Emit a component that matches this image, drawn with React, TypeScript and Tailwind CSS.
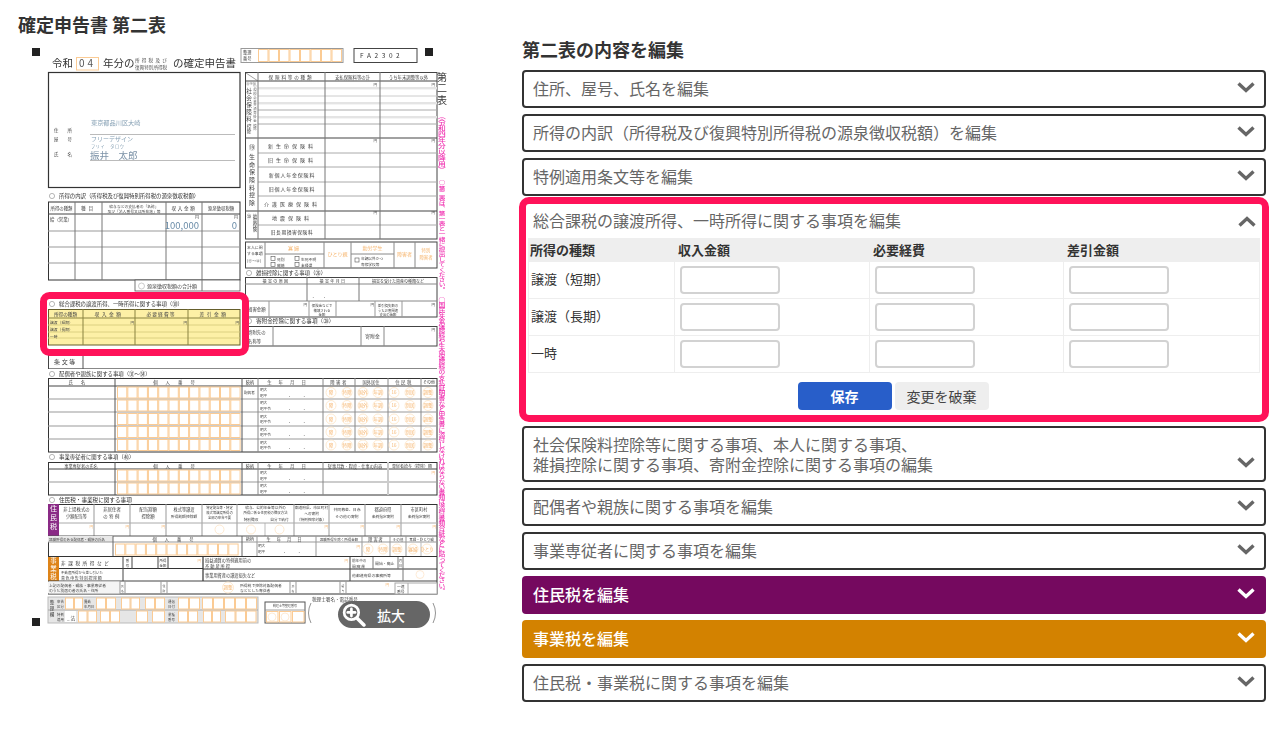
import type { ReactNode } from 'react';

const FONT = '"Noto Sans CJK JP", sans-serif';
const ORANGE = '#fbcb94';
const ORANGE_TEXT = '#f6b56e';
const PINK = '#ff1259';
const MAGENTA = '#f02fb0';

type TextProps = { x: number; y: number; s?: number; c?: string; a?: 'start' | 'middle' | 'end'; sp?: number; w?: number; children: ReactNode };

const T = ({ x, y, s = 5, c = '#444', a = 'start', sp = 0, w = 400, children }: TextProps) => (
    <text x={x} y={y} fontSize={s} fill={c} textAnchor={a} letterSpacing={sp} fontWeight={w}>
        {children}
    </text>
);

// vertical label, y is where the first glyph starts
const V = ({ x, y, s = 5, c = '#444', sp = 0, w = 400, children }: TextProps) => (
    <text x={x} y={y} fontSize={s} fill={c} letterSpacing={sp} fontWeight={w} writingMode="vertical-rl">
        {children}
    </text>
);

const H = ({ y, a, b, c = '#444', w = 1 }: { y: number; a: number; b: number; c?: string; w?: number }) => (
    <line x1={a} x2={b} y1={y} y2={y} stroke={c} strokeWidth={w} />
);

const U = ({ x, a, b, c = '#444', w = 1 }: { x: number; a: number; b: number; c?: string; w?: number }) => (
    <line x1={x} x2={x} y1={a} y2={b} stroke={c} strokeWidth={w} />
);

const Cells = ({ x, y, n, cw, h }: { x: number; y: number; n: number; cw: number; h: number }) => (
    <g>
        {Array.from({ length: n }).map((_, i) => (
            <rect key={i} x={x + i * cw + 0.5} y={y} width={cw - 1} height={h} fill="#fff" stroke={ORANGE} strokeWidth={1} />
        ))}
    </g>
);

const Mark = ({ x, y, t, r = 5 }: { x: number; y: number; t: string; r?: number }) => (
    <g>
        <circle cx={x} cy={y} r={r} fill="none" stroke="#fde3c4" strokeWidth={0.8} />
        <T x={x} y={y + 1.8} s={4.5} c={ORANGE_TEXT} a="middle">{t}</T>
    </g>
);

const Heading = ({ x, y, children, s = 6 }: { x: number; y: number; children: ReactNode; s?: number }) => (
    <g>
        <circle cx={x} cy={y - 2} r={2.6} fill="none" stroke="#888" strokeWidth={0.6} />
        <T x={x + 7} y={y} s={s} c="#333">{children}</T>
    </g>
);

function TaxForm() {
    const markCols = [331, 347, 363, 378, 394, 410, 428];
    const markText = ['障', '特障', '国外', '年調', '16', '別居', '調整'];
    const dependentRows = [392.5, 405.5, 419, 432, 445];
    return (
        <svg viewBox="20 40 430 600" width={430} height={600} className="blur-[0.25px]" style={{ fontFamily: FONT }}>
            {/* corners and title */}
            <rect x={32} y={48} width={8} height={8} fill="#222" />
            <rect x={425} y={48} width={8} height={8} fill="#222" />
            <rect x={32} y={618} width={8} height={8} fill="#222" />
            <T x={52} y={67} s={10.5} c="#333">令和</T>
            <rect x={76.5} y={57.5} width={22} height={12.5} fill="#fff" stroke={ORANGE} />
            <T x={87.5} y={67} s={10} c="#555" a="middle" sp={3}>04</T>
            <T x={103} y={67} s={10.5} c="#333">年分の</T>
            <T x={135} y={62} s={4.6} c="#555" sp={2.2}>所得税及び</T>
            <T x={135} y={69} s={4.6} c="#555">復興特別所得税</T>
            <T x={173} y={67} s={10.5} c="#333">の確定申告書</T>

            {/* number boxes */}
            <rect x={241} y={48.5} width={102} height={14} fill="#fff" stroke="#999" />
            <T x={243} y={54} s={4.2}>整理</T>
            <T x={243} y={60} s={4.2}>番号</T>
            <Cells x={258} y={49.5} n={8} cw={10.5} h={12} />
            <rect x={354} y={48.5} width={63} height={14} fill="#fff" stroke="#444" />
            <T x={360} y={58} s={6.5} c="#333" sp={3.6}>FA2302</T>

            {/* address */}
            <rect x={48.5} y={72.5} width={191.5} height={115} fill="#fff" stroke="#333" strokeWidth={1.2} />
            <T x={91} y={125} s={6.2} c="#86a0b4">東京都品川区大崎</T>
            <H y={134.5} a={90} b={235} c="#bbb" />
            <T x={91} y={141} s={6} c="#86a0b4">フリーデザイン</T>
            <T x={91} y={147.5} s={4.2} c="#86a0b4" sp={0.6}>フリイ　タロウ</T>
            <T x={90} y={158.5} s={9.5} c="#7d93a8">振井　太郎</T>
            <H y={160.5} a={90} b={235} c="#bbb" />
            <T x={54} y={132} s={4.4} sp={9}>住所</T>
            <T x={54} y={141} s={4.4} sp={9}>屋号</T>
            <T x={54} y={156} s={4.4} sp={9}>氏名</T>

            {/* income breakdown */}
            <Heading x={52} y={198} s={5.4}>所得の内訳（所得税及び復興特別所得税の源泉徴収税額）</Heading>
            <rect x={48.5} y={202} width={191.5} height={78} fill="#fff" stroke="#333" />
            <H y={214} a={48} b={240} />
            {[231, 247, 263].map((y) => <H key={y} y={y} a={48} b={240} c="#999" />)}
            {[75, 102, 166, 202].map((x) => <U key={x} x={x} a={202} b={280} c="#777" />)}
            <T x={61.5} y={210} s={4.4} a="middle">所得の種類</T>
            <T x={88.5} y={210} s={4.6} a="middle" sp={3}>種目</T>
            <T x={134} y={207.5} s={3.8} a="middle">給与などの支払者の「名称」</T>
            <T x={134} y={212.5} s={3.8} a="middle">及び「法人番号又は所在地」等</T>
            <T x={184} y={210} s={4.6} a="middle" sp={1.6}>収入金額</T>
            <T x={221} y={210} s={4.4} a="middle">源泉徴収税額</T>
            <T x={50} y={221} s={4.4}>給（営業）</T>
            <T x={199} y={219} s={4} a="end">円</T>
            <T x={238} y={219} s={4} a="end">円</T>
            <T x={199} y={229} s={9.5} c="#6a8ca8" a="end">100,000</T>
            <T x={237} y={229} s={9.5} c="#6a8ca8" a="end">0</T>
            <rect x={135} y={280} width={105} height={11} fill="#fff" stroke="#555" strokeWidth={0.8} />
            <U x={202} a={280} b={291} c="#777" />
            <circle cx={141.5} cy={286} r={3} fill="none" stroke="#aaa" strokeWidth={0.6} />
            <T x={147} y={288} s={5}>源泉徴収税額の合計額</T>

            {/* blended taxation, highlighted */}
            <Heading x={52} y={306} s={5.4}>総合課税の譲渡所得、一時所得に関する事項（㉚）</Heading>
            <rect x={48.5} y={309.5} width={191.5} height={35.5} fill="#fdf0a6" stroke="#655f2c" strokeWidth={1} />
            <H y={318} a={48} b={240} c="#8a8340" />
            {[325, 332, 338].map((y) => <H key={y} y={y} a={48} b={240} c="#d3c878" w={0.8} />)}
            {[83, 135, 188].map((x) => <U key={x} x={x} a={309} b={345} c="#8a8340" />)}
            <T x={65.5} y={316} s={4.6} a="middle">所得の種類</T>
            <T x={109} y={316} s={4.8} a="middle" sp={2.4}>収入金額</T>
            <T x={161} y={316} s={4.8} a="middle" sp={1}>必要経費等</T>
            <T x={214} y={316} s={4.8} a="middle" sp={2.4}>差引金額</T>
            <T x={50} y={323.5} s={3.8}>譲渡（短期）</T>
            <T x={50} y={331} s={3.8}>譲渡（長期）</T>
            <T x={50} y={338} s={3.8}>一時</T>
            {[134, 187, 239].map((x) => <T key={x} x={x} y={323.5} s={3.6} a="end">円</T>)}
            <H y={368.5} a={48} b={437} c="#888" />
            <U x={48.5} a={349} b={369} c="#444" />
            <U x={83} a={349} b={369} c="#555" />
            <T x={65.5} y={364} s={6} c="#444" a="middle" sp={1.6}>条文等</T>

            {/* insurance table */}
            <rect x={245.5} y={72.5} width={191.5} height={166.5} fill="#fff" stroke="#444" />
            <line x1={246} y1={73} x2={258} y2={81} stroke="#666" strokeWidth={0.6} />
            <H y={81} a={245} b={437} />
            {[87, 102, 116].map((y) => <rect key={y} x={258} y={y} width={179} height={2.4} fill="#e4e4e4" />)}
            {[110, 124].map((y) => <H key={y} y={y} a={258} b={437} c="#aaa" />)}
            <H y={96} a={258} b={437} c="#ccc" />
            <H y={138} a={245} b={437} c="#444" w={1.2} />
            {[153, 167, 182, 196, 225].map((y) => <H key={y} y={y} a={258} b={437} c="#aaa" />)}
            <H y={211} a={245} b={437} c="#444" w={1.2} />
            <U x={258} a={72} b={239} c="#777" />
            <U x={325} a={72} b={239} c="#777" />
            <U x={380} a={72} b={239} c="#777" />
            <T x={291} y={78.5} s={4.6} a="middle" sp={1.8}>保険料等の種類</T>
            <T x={352.5} y={78.5} s={4.4} a="middle">支払保険料等の計</T>
            <T x={408.5} y={78.5} s={4.4} a="middle">うち年末調整等以外</T>
            <T x={246} y={85} s={3.4}>⑬⑮⑯</T>
            <V x={249} y={88} s={5.6} sp={1.4}>社会保険料</V>
            <V x={249} y={124} s={4.6} sp={0.6}>控除</V>
            <V x={255} y={84} s={3.4} c="#666" sp={0.5}>小規模企業共済等掛金</V>
            <V x={255} y={124} s={3.4} c="#666">控除</V>
            {[[146, '新生命保険料'], [160, '旧生命保険料'], [174.5, '新個人年金保険料'], [189, '旧個人年金保険料'], [203.5, '介護医療保険料']].map(([y, t]) => (
                <T key={String(t)} x={292} y={Number(y) + 2} s={5} a="middle" sp={String(t).length > 7 ? 0.8 : 3}>{t}</T>
            ))}
            <T x={252} y={150} s={6.5} a="middle">⑲</T>
            <V x={252} y={154} s={6} sp={1.6}>生命保険料控除</V>
            <T x={292} y={220} s={5} a="middle" sp={3}>地震保険料</T>
            <T x={292} y={234} s={4.8} a="middle" sp={0.5}>旧長期損害保険料</T>
            <V x={249} y={214} s={4.4}>⑳</V>
            <V x={255} y={214} s={4.4}>地震保険</V>
            {[[377, 87], [435, 87], [377, 143], [435, 143], [377, 215], [435, 215]].map(([x, y]) => (
                <T key={String(x) + y} x={x} y={y - 1} s={3.6} a="end">円</T>
            ))}

            {/* personal status */}
            <rect x={245.5} y={242} width={191.5} height={26} fill="#fff" stroke="#444" />
            {[265, 324, 351, 394, 415].map((x) => <U key={x} x={x} a={242} b={268} c="#888" />)}
            <H y={254} a={265} b={324} c="#888" />
            <H y={254} a={351} b={394} c="#888" />
            <T x={247} y={248.5} s={3.9}>本人に関</T>
            <T x={247} y={254.5} s={3.9}>する事項</T>
            <T x={247} y={262} s={3.9}>(⑰〜㉒)</T>
            <T x={294} y={250} s={5} c={ORANGE_TEXT} a="middle" sp={1}>寡婦</T>
            <T x={337.5} y={256} s={5} c={ORANGE_TEXT} a="middle">ひとり親</T>
            <T x={372.5} y={250} s={5} c={ORANGE_TEXT} a="middle">勤労学生</T>
            <T x={404.5} y={256} s={5} c={ORANGE_TEXT} a="middle">障害者</T>
            <T x={426} y={252} s={4.4} c={ORANGE_TEXT} a="middle">特別</T>
            <T x={426} y={259} s={4.4} c={ORANGE_TEXT} a="middle">障害者</T>
            {[[271, 256.5], [295, 256.5], [271, 262.5], [295, 262.5], [355, 258]].map(([x, y]) => (
                <rect key={String(x) + y} x={x} y={y} width={4} height={4} fill="#fff" stroke="#555" strokeWidth={0.6} />
            ))}
            <T x={277} y={260.5} s={3.8}>死別</T>
            <T x={301} y={260.5} s={3.8}>生死不明</T>
            <T x={277} y={266.5} s={3.8}>離婚</T>
            <T x={301} y={266.5} s={3.8}>未帰還</T>
            <T x={361} y={260} s={3.7}>年調以外かつ</T>
            <T x={361} y={266} s={3.7}>専修学校等</T>

            {/* casualty */}
            <Heading x={249} y={275} s={5.4}>雑損控除に関する事項（㉖）</Heading>
            <rect x={245.5} y={277.5} width={191.5} height={39.5} fill="#fff" stroke="#444" />
            <H y={284} a={245} b={437} c="#888" />
            <H y={301} a={245} b={437} c="#888" />
            <U x={307} a={277} b={301} c="#777" />
            <U x={359} a={277} b={301} c="#777" />
            {[269, 309, 336, 375, 402].map((x) => <U key={x} x={x} a={301} b={317} c="#999" />)}
            <T x={276} y={282.5} s={4} a="middle" sp={1.4}>損害の原因</T>
            <T x={333} y={282.5} s={4} a="middle" sp={1.4}>損害年月日</T>
            <T x={398} y={282.5} s={4} a="middle">損害を受けた資産の種類など</T>
            <T x={324} y={298} s={5} a="middle" sp={10}>..</T>
            <T x={248} y={311} s={4.4}>損害金額</T>
            <T x={322} y={307} s={3.4} a="middle">保険金などで</T>
            <T x={322} y={311.5} s={3.4} a="middle">補填される</T>
            <T x={322} y={316} s={3.4} a="middle">金額</T>
            <T x={388} y={307} s={3.4} a="middle">差引損失額の</T>
            <T x={388} y={311.5} s={3.4} a="middle">うち災害関連</T>
            <T x={388} y={316} s={3.4} a="middle">支出の金額</T>
            {[307, 374, 435].map((x) => <T key={x} x={x} y={306} s={3.6} a="end">円</T>)}

            {/* donation */}
            <Heading x={249} y={323} s={5.6}>寄附金控除に関する事項（㉘）</Heading>
            <rect x={245.5} y={326.5} width={191.5} height={19.5} fill="#fff" stroke="#444" />
            {[273, 361, 384].map((x) => <U key={x} x={x} a={326} b={346} c="#888" />)}
            <T x={248} y={334} s={4.4}>寄附先の</T>
            <T x={248} y={343} s={4.4}>名称等</T>
            <T x={372.5} y={338} s={4.8} a="middle">寄附金</T>
            <T x={435} y={331} s={3.6} a="end">円</T>

            {/* dependents */}
            <Heading x={52} y={376} s={5.4}>配偶者や親族に関する事項（㉛〜㉞）</Heading>
            <rect x={48.5} y={378.5} width={388.5} height={73.5} fill="#fff" stroke="#333" />
            <H y={386} a={48} b={437} />
            {[399, 412, 426, 439].map((y) => <H key={y} y={y} a={48} b={437} c="#999" />)}
            {[115, 242].map((x) => <U key={x} x={x} a={378} b={452} c="#555" />)}
            {[258, 323, 355, 388, 421].map((x) => <U key={x} x={x} a={378} b={452} c="#888" />)}
            <T x={81} y={384} s={4.4} a="middle" sp={8}>氏名</T>
            <T x={178} y={384} s={4.4} a="middle" sp={8}>個人番号</T>
            <T x={250} y={384} s={4.2} a="middle">続柄</T>
            <T x={290} y={384} s={4.4} a="middle" sp={7}>生年月日</T>
            <T x={339} y={384} s={4.4} a="middle" sp={1.4}>障害者</T>
            <T x={371} y={384} s={4.2} a="middle">国外居住</T>
            <T x={404} y={384} s={4.4} a="middle" sp={1.4}>住民税</T>
            <T x={429} y={384} s={4} a="middle">その他</T>
            <T x={244} y={393.5} s={3.6}>配偶者</T>
            {dependentRows.map((y, i) => (
                <g key={y}>
                    <Cells x={117} y={y - 5.5} n={12} cw={10.3} h={11} />
                    <T x={260} y={y - 1.5} s={3.6}>明大</T>
                    <T x={260} y={y + 4} s={3.6}>{i === 0 ? '昭平' : '昭平令'}</T>
                    <T x={289} y={y + 4} s={5} sp={13}>..</T>
                    {markCols.map((x, j) => <Mark key={x} x={x} y={y} t={markText[j]} />)}
                </g>
            ))}

            {/* family employees */}
            <Heading x={52} y={459} s={5.4}>事業専従者に関する事項（㊵）</Heading>
            <rect x={48.5} y={462.5} width={388.5} height={32.5} fill="#fff" stroke="#333" />
            <H y={469} a={48} b={437} />
            <H y={482} a={48} b={437} c="#999" />
            {[115, 242].map((x) => <U key={x} x={x} a={462} b={495} c="#555" />)}
            <U x={258} a={462} b={495} c="#888" />
            <U x={323} a={462} b={495} c="#888" />
            <rect x={387} y={462} width={2} height={33} fill="#ccc" />
            <T x={81} y={467.5} s={4.2} a="middle">事業専従者の氏名</T>
            <T x={178} y={467.5} s={4.4} a="middle" sp={8}>個人番号</T>
            <T x={250} y={467.5} s={4.2} a="middle">続柄</T>
            <T x={290} y={467.5} s={4.4} a="middle" sp={7}>生年月日</T>
            <T x={355} y={467.5} s={4.2} a="middle">従事月数・程度・仕事の内容</T>
            <T x={412} y={467.5} s={4} a="middle">専従者給与（控除）額</T>
            <T x={435} y={474} s={3.6} c={ORANGE_TEXT} a="end">円</T>
            {[475.5, 488.5].map((y) => (
                <g key={y}>
                    <Cells x={117} y={y - 5.5} n={12} cw={10.3} h={11} />
                    <T x={260} y={y - 1.5} s={3.6}>明大</T>
                    <T x={260} y={y + 4} s={3.6}>昭平</T>
                    <T x={289} y={y + 4} s={5} sp={13}>..</T>
                </g>
            ))}

            {/* resident tax */}
            <Heading x={52} y={502} s={5.6}>住民税・事業税に関する事項</Heading>
            <rect x={48.5} y={504.5} width={388.5} height={89.5} fill="#fff" stroke="#333" />
            <rect x={48} y={504} width={11} height={32} fill="#8a2a86" />
            <V x={53.5} y={505} s={7} c="#fff" sp={2}>住民税</V>
            {[94, 130, 166, 202, 237, 294, 329, 365, 401].map((x) => <U key={x} x={x} a={504} b={536} c="#999" />)}
            <U x={265} a={523} b={536} c="#bbb" />
            <H y={523} a={59} b={437} c="#aaa" />
            <H y={536} a={48} b={437} c="#555" />
            <T x={76.5} y={511} s={4.4} a="middle">非上場株式の</T>
            <T x={76.5} y={518} s={4.2} a="middle">少額配当等</T>
            <T x={112} y={511} s={4.4} a="middle">非居住者</T>
            <T x={112} y={518} s={4.4} a="middle" sp={1.4}>の特例</T>
            <T x={148} y={511} s={4.4} a="middle">配当割額</T>
            <T x={148} y={518} s={4.4} a="middle">控除額</T>
            <T x={184} y={511} s={4.2} a="middle">株式等譲渡</T>
            <T x={184} y={518} s={3.8} a="middle">所得割額控除額</T>
            <T x={219.5} y={508.5} s={3.3} a="middle">特定配当等・特定</T>
            <T x={219.5} y={513.5} s={3.3} a="middle">株式等譲渡所得の</T>
            <T x={219.5} y={518.5} s={3.3} a="middle">全部の申告不要</T>
            <T x={265.5} y={509} s={3.7} a="middle">給与、公的年金等以外の</T>
            <T x={265.5} y={514} s={3.4} a="middle">所得に係る住民税の徴収方法</T>
            <T x={251} y={520.5} s={3.7} a="middle">特別徴収</T>
            <T x={279.5} y={520.5} s={3.7} a="middle">自分で納付</T>
            <T x={311.5} y={509} s={3.7} a="middle">都道府県、市区町村</T>
            <T x={311.5} y={514.5} s={3.7} a="middle">への寄附</T>
            <T x={311.5} y={520.5} s={3.7} a="middle">（特例控除対象）</T>
            <T x={347} y={511} s={3.9} a="middle">共同募金、日赤</T>
            <T x={347} y={518} s={3.9} a="middle">その他の寄附</T>
            <T x={383} y={511} s={4.2} a="middle">都道府県</T>
            <T x={383} y={518} s={3.7} a="middle">条例指定寄附</T>
            <T x={419} y={511} s={4.2} a="middle">市区町村</T>
            <T x={419} y={518} s={3.7} a="middle">条例指定寄附</T>
            {[94, 130, 166, 329, 365, 401, 437].map((x) => <T key={x} x={x - 1} y={528} s={3.6} c={ORANGE_TEXT} a="end">円</T>)}
            {[219.5, 251, 279.5].map((x) => <circle key={x} cx={x} cy={529.5} r={4.5} fill="none" stroke="#fde3c4" strokeWidth={0.8} />)}

            {/* retirement income row */}
            <rect x={48} y={536} width={65} height={6} fill="#e8e8e8" />
            <H y={542} a={48} b={437} c="#999" />
            <U x={113} a={536} b={556} c="#666" />
            <U x={242} a={536} b={556} c="#666" />
            <U x={257} a={536} b={556} c="#999" />
            <U x={316} a={536} b={556} c="#999" />
            <U x={362} a={536} b={556} c="#999" />
            <U x={390} a={536} b={556} c="#999" />
            <U x={406} a={536} b={556} c="#999" />
            <U x={421} a={536} b={556} c="#bbb" />
            <T x={49} y={541} s={3.5}>退職所得のある配偶者・親族の氏名</T>
            <T x={177} y={541} s={4.2} a="middle" sp={8}>個人番号</T>
            <T x={250} y={541} s={4} a="middle">続柄</T>
            <T x={287} y={541} s={4.2} a="middle" sp={6}>生年月日</T>
            <T x={339} y={541} s={3.5} a="middle">退職所得を除く所得金額</T>
            <T x={376} y={541} s={4.2} a="middle" sp={1}>障害者</T>
            <T x={398} y={541} s={3.6} a="middle">その他</T>
            <T x={421.5} y={541} s={3.5} a="middle">寡婦・ひとり親</T>
            <Cells x={115} y={544} n={12} cw={10.3} h={11} />
            <T x={258} y={547} s={3.6}>明大</T>
            <T x={258} y={553} s={3.6}>昭平</T>
            <T x={284} y={553} s={5} sp={13}>..</T>
            <T x={360} y={548} s={3.6} c={ORANGE_TEXT} a="end">円</T>
            {[[368, '障'], [383, '特障'], [397, '調整'], [413, '寡婦'], [427, 'ひとり']].map(([x, t]) => <Mark key={String(x)} x={Number(x)} y={549} t={String(t)} />)}
            <H y={556.5} a={48} b={437} c="#333" w={1.2} />

            {/* business tax */}
            <rect x={48} y={557} width={11} height={24} fill="#de8419" />
            <V x={53.5} y={557.5} s={6.4} c="#fff" sp={1.4}>事業税</V>
            <H y={568.5} a={59} b={203} c="#333" />
            <H y={569} a={203} b={437} c="#333" />
            <H y={581} a={48} b={437} c="#444" />
            {[123, 132, 158, 168].map((x) => <U key={x} x={x} a={557} b={569} c="#444" />)}
            <U x={123} a={569} b={581} c="#444" />
            <U x={203} a={557} b={581} c="#333" w={1.2} />
            <U x={350} a={557} b={581} c="#444" />
            <U x={373} a={557} b={569} c="#777" />
            <U x={398} a={557} b={569} c="#777" />
            <U x={403} a={557} b={569} c="#777" />
            <U x={403} a={569} b={581} c="#777" />
            <T x={61} y={565} s={4.6} sp={2.6}>非課税所得など</T>
            <T x={127.5} y={562} s={3.4} a="middle">番</T>
            <T x={127.5} y={567} s={3.4} a="middle">号</T>
            <T x={163} y={562} s={3.4} a="middle">所得</T>
            <T x={163} y={567} s={3.4} a="middle">金額</T>
            <T x={201} y={562} s={3.6} c={ORANGE_TEXT} a="end">円</T>
            <T x={61} y={574} s={3.5}>不動産所得から差し引いた</T>
            <T x={61} y={580} s={4} sp={0.6}>青色申告特別控除額</T>
            <T x={205} y={562} s={4.2}>損益通算の特例適用前の</T>
            <T x={205} y={567.5} s={4.2} sp={1}>不動産所得</T>
            <T x={205} y={577} s={4.2}>事業用資産の譲渡損失など</T>
            <T x={348} y={562} s={3.6} c={ORANGE_TEXT} a="end">円</T>
            <T x={352} y={562} s={3.6}>前年中の</T>
            <T x={352} y={568} s={3.6}>開(廃)業</T>
            <T x={375} y={565} s={3.9}>開始・廃止</T>
            <T x={399} y={562} s={3}>月</T>
            <T x={399} y={567} s={3}>日</T>
            <T x={352} y={577} s={3.9}>他都道府県の事務所等</T>
            <circle cx={420} cy={574.5} r={4} fill="none" stroke="#fde3c4" strokeWidth={0.7} />

            {/* separate residence */}
            <rect x={48} y={581.5} width={72} height={12} fill="#f4f4f4" />
            <T x={49} y={586.5} s={3.8}>上記の配偶者・親族・事業専従者</T>
            <T x={49} y={592} s={3.8}>のうち別居の者の氏名・住所</T>
            {[120, 125, 161, 167, 290, 296, 340, 346].map((x) => <U key={x} x={x} a={581} b={594} c="#999" />)}
            <T x={122.5} y={587} s={2.8} a="middle">氏</T>
            <T x={122.5} y={592} s={2.8} a="middle">名</T>
            <T x={164} y={587} s={2.8} a="middle">住</T>
            <T x={164} y={592} s={2.8} a="middle">所</T>
            <Mark x={228} y={587.5} t="調整" r={5.5} />
            <T x={240} y={586.5} s={3.8}>所得税で控除対象配偶者</T>
            <T x={240} y={592} s={3.8}>などとした専従者</T>
            <T x={293} y={587} s={2.8} a="middle">氏</T>
            <T x={293} y={592} s={2.8} a="middle">名</T>
            <T x={343} y={587} s={2.8} a="middle">給</T>
            <T x={343} y={592} s={2.8} a="middle">与</T>
            <T x={389} y={586} s={3.6} c={ORANGE_TEXT} a="end">円</T>
            <rect x={395} y={583} width={42} height={11} fill="#fff" stroke="#aaa" />
            <U x={408} a={583} b={594} c="#aaa" />
            <T x={397} y={588} s={3.8}>一連</T>
            <T x={397} y={593} s={3.8}>番号</T>

            {/* office use */}
            <rect x={48} y={597} width={210} height={26} fill="#e6e6e6" stroke="#bbb" />
            <H y={610} a={48} b={258} c="#aaa" />
            <V x={52} y={600} s={4.6} sp={1.6}>整理欄</V>
            {[[65, 2, 9], [96, 2, 10], [121, 2, 9.5], [145, 2, 10], [178, 2, 11], [202, 5, 11]].map(([x, n, w]) => <Cells key={x} x={x} y={598} n={n} cw={w} h={11} />)}
            {[[78, 2, 9.5], [100, 2, 10], [136, 1, 12], [152, 1, 13], [178, 2, 10], [203, 2, 9], [225, 3, 10.5]].map(([x, n, w]) => <Cells key={x} x={x} y={611} n={n} cw={w} h={11} />)}
            <T x={57} y={603} s={3.4}>申告</T>
            <T x={57} y={608} s={3.4}>区分</T>
            <T x={84} y={603} s={3.4}>異動</T>
            <T x={84} y={608} s={3.4}>年月日</T>
            <T x={168} y={603} s={3.4}>通信</T>
            <T x={168} y={608} s={3.4}>日付</T>
            <T x={57} y={616} s={3.4}>特例</T>
            <T x={57} y={621} s={3.4}>適用</T>
            <rect x={65} y={611} width={11} height={11} fill="#fff" />
            <T x={67} y={620} s={4.6}>_ 法</T>
            <T x={168} y={616} s={3.4}>業種</T>
            <T x={168} y={621} s={3.4}>番号</T>
            <rect x={265} y={602} width={40} height={21} fill="#fff" stroke="#555" />
            <H y={610} a={265} b={305} c="#888" w={0.8} />
            <T x={285} y={607} s={3} a="middle">税理士等整理番号</T>
            {[266.5, 279.5, 292.5].map((x) => <rect key={x} x={x} y={611.5} width={11.5} height={10.5} fill="#fff" stroke={ORANGE} />)}
            {[272, 285].map((x) => <circle key={x} cx={x} cy={617} r={4} fill="none" stroke="#fde3c4" strokeWidth={0.7} />)}
            <T x={312} y={601} s={4.6}>税理士署名・電話番号</T>
            <path d="M311 603 Q306 613 311 623" fill="none" stroke="#777" strokeWidth={0.8} />
            <path d="M433 603 Q438 613 433 623" fill="none" stroke="#777" strokeWidth={0.8} />

            {/* side text */}
            <V x={442} y={72} s={10} c="#333" sp={1.4}>第二表</V>
            <g transform="translate(442 0) scale(1.3 1) translate(-442 0)">
                <V x={442} y={113} s={6} c={MAGENTA} w={500}>（令和四年分以降用）</V>
                <V x={442} y={180} s={5.1} c={MAGENTA} w={500}>○第二表は、第一表と一緒に提出してください。</V>
                <V x={442} y={297} s={5.2} c={MAGENTA} w={500}>○国民年金保険料や生命保険料の支払証明書など申告書に添付しなければならない書類は添付書類台紙などに貼ってください。</V>
            </g>

            {/* highlight sits above the drawing */}
            <rect x={43.5} y={295.5} width={202} height={57} rx={6} fill="none" stroke={PINK} strokeWidth={7} />
        </svg>
    );
}

const Chevron = ({ up = false, color = '#666' }: { up?: boolean; color?: string }) => (
    <svg viewBox="0 0 18 11" width={18} height={11} className="shrink-0">
        <polyline
            points={up ? '1.5,9.5 9,2.5 16.5,9.5' : '1.5,1.5 9,8.5 16.5,1.5'}
            fill="none"
            stroke={color}
            strokeWidth={3.4}
        />
    </svg>
);

const Accordion = ({ label }: { label: string }) => (
    <button type="button" className="mb-[6px] flex h-[38px] w-full items-center justify-between rounded border-2 border-[#333] bg-white pr-[9px] pl-[9px] text-base text-[#666]">
        <span className="pb-[2px]">{label}</span>
        <span className="pb-[3px]"><Chevron /></span>
    </button>
);

const ColorAccordion = ({ label, bg }: { label: string; bg: string }) => (
    <button type="button" className={`mb-[6px] flex h-[38px] w-full items-center justify-between rounded pr-[11px] pl-[11px] text-base font-medium text-white ${bg}`}>
        <span className="pb-[2px]">{label}</span>
        <span className="pb-[3px]"><Chevron color="#fff" /></span>
    </button>
);

const rows = ['譲渡（短期）', '譲渡（長期）', '一時'];

function TransferPanel() {
    return (
        <div className="-mx-[3px] mt-[-5px] mb-[4px] h-[225px] rounded-[10px] border-[7px] border-[#ff1259] bg-white">
            <div className="flex h-[34px] items-center justify-between pr-[6px] pl-[7px] text-base text-[#666]">
                <span className="pb-[2px]">総合課税の譲渡所得、一時所得に関する事項を編集</span>
                <Chevron up />
            </div>
            <div className="mx-[2px] grid grid-cols-[147px_195px_194px_196px] text-[13px] text-[#333]">
                {['所得の種類', '収入金額', '必要経費', '差引金額'].map((h, i) => (
                    <div key={h} className={`flex h-[24px] items-center bg-[#eee] pb-[1px] font-bold ${i === 0 ? 'pl-[2px]' : 'pl-[3px]'}`}>
                        {h}
                    </div>
                ))}
                {rows.map((r) => (
                    <div key={r} className="contents">
                        <div className="flex h-[37px] items-center border-r border-b border-l border-[#eee] pb-[2px] pl-[2px]">{r}</div>
                        {[0, 1, 2].map((c) => (
                            <div key={c} className="flex h-[37px] items-center border-r border-b border-[#eee] pl-[5px]">
                                <input type="text" className="h-[28px] w-[100px] rounded border-2 border-[#d2d2d2] bg-white" />
                            </div>
                        ))}
                    </div>
                ))}
            </div>
            <div className="mt-[9px] flex justify-center gap-[3px] pr-[2px] text-sm">
                <button type="button" className="h-[28px] w-[94px] rounded bg-[#285ec9] font-bold text-white">保存</button>
                <button type="button" className="h-[28px] w-[94px] rounded bg-[#eee] text-[#444]">変更を破棄</button>
            </div>
        </div>
    );
}

export default function App() {
    return (
        <div className="flex min-h-screen w-full bg-white" style={{ fontFamily: FONT }}>
            <div className="w-[522px] shrink-0">
                <h1 className="mt-[10px] ml-[18px] h-[28px] text-lg leading-[28px] font-bold text-[#333]">確定申告書 第二表</h1>
                <div className="relative mt-[2px] ml-[20px] w-[430px]">
                    <TaxForm />
                    <button type="button" className="absolute top-[561px] left-[318px] flex h-[27px] w-[92px] items-center rounded-full bg-[#666] pl-[3px] text-sm font-medium text-white">
                        <svg viewBox="0 0 24 24" width={25} height={25} fill="none" stroke="#fff" strokeWidth={2.6} strokeLinecap="round">
                            <circle cx={10} cy={10} r={7} />
                            <line x1={15.5} y1={15.5} x2={22} y2={22} strokeWidth={3.4} />
                            <line x1={6.5} y1={10} x2={13.5} y2={10} />
                            <line x1={10} y1={6.5} x2={10} y2={13.5} />
                        </svg>
                        <span className="ml-[11px]">拡大</span>
                    </button>
                </div>
            </div>
            <div className="w-[744px] shrink-0">
                <h2 className="mt-[37px] mb-[9px] h-[24px] text-lg leading-[24px] font-bold text-[#333]">第二表の内容を編集</h2>
                <Accordion label="住所、屋号、氏名を編集" />
                <Accordion label="所得の内訳（所得税及び復興特別所得税の源泉徴収税額）を編集" />
                <Accordion label="特例適用条文等を編集" />
                <TransferPanel />
                <button type="button" className="mb-[6px] flex h-[56px] w-full justify-between rounded border-2 border-[#333] bg-white pt-[6px] pr-[9px] pl-[9px] text-left text-base leading-[20px] text-[#666]">
                    <span>
                        社会保険料控除等に関する事項、本人に関する事項、
                        <br />
                        雑損控除に関する事項、寄附金控除に関する事項の編集
                    </span>
                    <span className="mt-[23px]"><Chevron /></span>
                </button>
                <Accordion label="配偶者や親族に関する事項を編集" />
                <Accordion label="事業専従者に関する事項を編集" />
                <ColorAccordion label="住民税を編集" bg="bg-[#75095f]" />
                <ColorAccordion label="事業税を編集" bg="bg-[#d38200]" />
                <Accordion label="住民税・事業税に関する事項を編集" />
            </div>
        </div>
    );
}
